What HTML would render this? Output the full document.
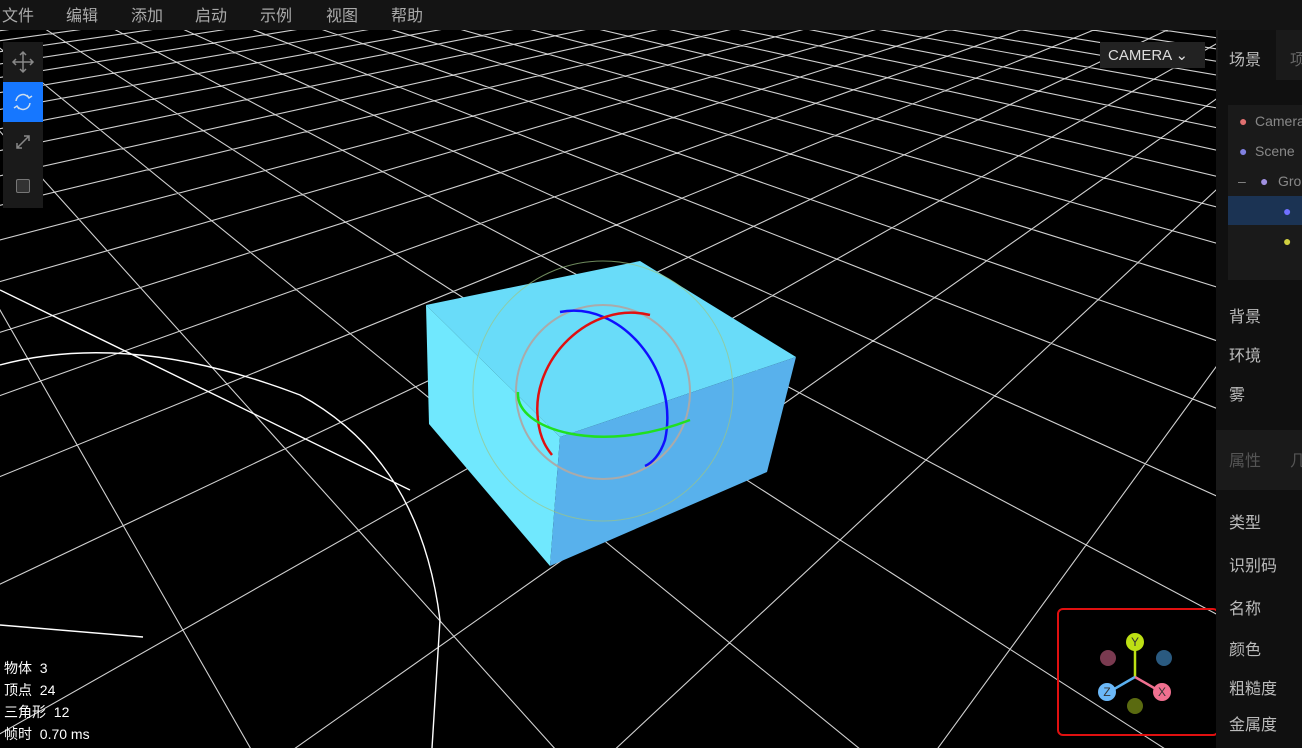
<!DOCTYPE html>
<html style="width:1302px;height:748px;overflow:hidden"><head><meta charset="utf-8"><style>
*{margin:0;padding:0;box-sizing:border-box}
body{width:1302px;height:748px;overflow:hidden;background:#000;font-family:"Liberation Sans","Noto Sans CJK SC",sans-serif;position:relative;color:#ccc}
#menu{position:absolute;left:0;top:0;width:1302px;height:30px;background:#141414;font-size:16px;color:#aaa;z-index:2}
#menu span{position:absolute;top:2px}
#vp{position:absolute;left:0;top:0;width:1216px;height:748px;overflow:hidden;background:#000}
#tools{position:absolute;left:3px;top:42px;width:40px;height:166px;background:#1a1a1a}
.t{position:absolute;left:0;width:40px;height:40px}
#panel{position:absolute;left:1216px;top:30px;width:86px;height:718px;background:#101010;font-size:16px;color:#bbb;overflow:hidden}
.lbl{position:absolute;left:13px}
.stat{position:absolute;left:4px;color:#fff;font-size:14px}
</style></head><body>
<div id="vp">
<svg id="sv" width="1216" height="748" viewBox="0 0 1216 748" style="position:absolute;left:0;top:0;overflow:hidden">
<g id="grid" stroke="#d0d0d0" stroke-width="1.1" fill="none"></g>
<g stroke="#fff" stroke-width="1.4" fill="none">
<path d="M0,365 Q130,330 300,395 Q420,460 440,620 L432,748"/>
<path d="M0,290 L410,490 M0,625 L143,637"/>
</g>
<polygon points="426,305 640,261 796,357 560,437" fill="#69dcf9"/>
<polygon points="426,305 560,437 550,566 429,424" fill="#70e8fe"/>
<polygon points="560,437 796,357 767,472 550,566" fill="#58b1ec"/>
<g fill="none" stroke-width="2.5">
<circle cx="603" cy="391" r="130" stroke="#9cc585" stroke-width="1" opacity=".7"/>
<circle cx="603" cy="392" r="87" stroke="#aaa" stroke-width="2"/>
<path d="M560,312 C620,300 680,370 665,440 C660,455 652,463 645,466" stroke="#1010ff"/>
<path d="M650,315 C590,300 530,360 538,420 C540,440 548,450 552,455" stroke="#e01010"/>
<path d="M518,392 C515,430 600,455 690,420" stroke="#20e020"/>
</g>
</svg>
<div id="tools">
<div class="t" style="top:0"><svg width="40" height="40"><g stroke="#888" stroke-width="1.5" fill="none"><path d="M20,10V30M10,20H30M17,13L20,10L23,13M17,27L20,30L23,27M13,17L10,20L13,23M27,17L30,20L27,23"/></g></svg></div>
<div class="t" style="top:40px;background:#1677ff"><svg width="40" height="40"><g stroke="#cde" stroke-width="1.5" fill="none"><path d="M13,19A7,7 0 0 1 26,16M27,21A7,7 0 0 1 14,24M24,13L26,16L29,14M16,27L14,24L11,26"/></g></svg></div>
<div class="t" style="top:80px"><svg width="40" height="40"><g stroke="#888" stroke-width="1.5" fill="none"><path d="M14,26L26,14M21,14H26V19M14,21V26H19"/></g></svg></div>
<div class="t" style="top:124px"><div style="position:absolute;left:13px;top:13px;width:14px;height:14px;border:1.5px solid #777;border-radius:2px;background:#333"></div></div>
</div>
<div style="position:absolute;left:1100px;top:42px;width:105px;height:26px;background:#222;color:#ddd;font-size:15px;padding:4px 0 0 8px">CAMERA ⌄</div>
<div style="position:absolute;left:1057px;top:608px;width:162px;height:128px;border:2.5px solid #e01010;border-radius:6px">
<svg width="157" height="123"><g><line x1="76" y1="33" x2="76" y2="67" stroke="#bde014" stroke-width="2.5"/><line x1="76" y1="67" x2="50" y2="82" stroke="#5ab0f0" stroke-width="2.5"/><line x1="76" y1="67" x2="102" y2="82" stroke="#f07090" stroke-width="2.5"/>
<circle cx="49" cy="48" r="8" fill="#7a3a50"/><circle cx="105" cy="48" r="8" fill="#2a5a80"/><circle cx="76" cy="96" r="8" fill="#5a6a10"/>
<circle cx="76" cy="32" r="9" fill="#bde014"/><circle cx="48" cy="82" r="9" fill="#6bb8f8"/><circle cx="103" cy="82" r="9" fill="#f07090"/>
<g font-size="12" fill="#333" text-anchor="middle" font-family="Liberation Sans"><text x="76" y="36">Y</text><text x="48" y="86">Z</text><text x="103" y="86">X</text></g></g></svg></div>
<div class="stat" style="top:658px">物体&nbsp; 3</div>
<div class="stat" style="top:680px">顶点&nbsp; 24</div>
<div class="stat" style="top:702px">三角形&nbsp; 12</div>
<div class="stat" style="top:724px">帧时&nbsp; 0.70 ms</div>
</div>
<div id="menu"><span style="left:2px">文件</span><span style="left:66px">编辑</span><span style="left:131px">添加</span><span style="left:195px">启动</span><span style="left:260px">示例</span><span style="left:326px">视图</span><span style="left:391px">帮助</span></div>
<div id="panel">
<div style="position:absolute;left:0;top:0;width:86px;height:50px;background:#1a1a1a"></div>
<div style="position:absolute;left:2px;top:0;width:58px;height:50px;background:#111"></div>
<div class="lbl" style="top:16px">场景</div><div class="lbl" style="left:74px;top:16px;color:#666">项</div>
<div style="position:absolute;left:12px;top:75px;width:74px;height:175px;background:#1a1a1a;font-size:14px;color:#888;overflow:hidden">
<div style="position:absolute;left:0;top:91px;width:74px;height:29px;background:#1b3353"></div>
<span style="position:absolute;left:11px;top:8px;color:#e07070">●</span><span style="position:absolute;left:27px;top:8px">Camera</span>
<span style="position:absolute;left:11px;top:38px;color:#8080e0">●</span><span style="position:absolute;left:27px;top:38px">Scene</span>
<span style="position:absolute;left:10px;top:68px">–</span><span style="position:absolute;left:32px;top:68px;color:#a090e0">●</span><span style="position:absolute;left:50px;top:68px">Gro</span>
<span style="position:absolute;left:55px;top:98px;color:#7070ff">●</span>
<span style="position:absolute;left:55px;top:128px;color:#d0d040">●</span></div>
<div class="lbl" style="top:273px">背景</div><div class="lbl" style="top:312px">环境</div><div class="lbl" style="top:351px">雾</div>
<div style="position:absolute;left:0;top:400px;width:86px;height:60px;background:#1a1a1a"></div>
<div class="lbl" style="top:417px;color:#555">属性</div><div class="lbl" style="left:74px;top:417px;color:#555">几</div>
<div class="lbl" style="top:479px">类型</div><div class="lbl" style="top:522px">识别码</div><div class="lbl" style="top:565px">名称</div><div class="lbl" style="top:606px">颜色</div><div class="lbl" style="top:645px">粗糙度</div><div class="lbl" style="top:681px">金属度</div>
</div>
<script>
(function(){
var pu=0.1243,pv=0.1318;
function P(u,v){var w=1+pu*u+pv*v;return [(840+201.1*u-36.9*v)/w,(540-22.87*u-23.72*v)/w];}
var d="";
for(var u=-25;u<=120;u++){var vlo=(0.3-1-pu*u)/pv;var a=P(u,vlo),b=P(u,800);d+="M"+a[0].toFixed(1)+","+a[1].toFixed(1)+"L"+b[0].toFixed(1)+","+b[1].toFixed(1);}
for(var v=-25;v<=120;v++){var ulo=(0.3-1-pv*v)/pu;var a=P(ulo,v),b=P(800,v);d+="M"+a[0].toFixed(1)+","+a[1].toFixed(1)+"L"+b[0].toFixed(1)+","+b[1].toFixed(1);}
var p=document.createElementNS("http://www.w3.org/2000/svg","path");p.setAttribute("d",d);document.getElementById("grid").appendChild(p);
})();
</script>
</body></html>
